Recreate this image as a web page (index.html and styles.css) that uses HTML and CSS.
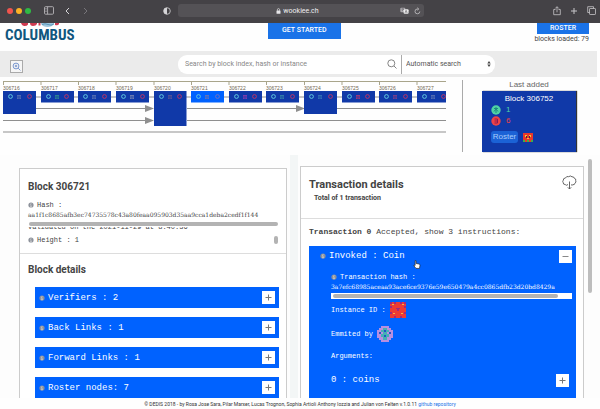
FILE: index.html
```html
<!DOCTYPE html>
<html lang="en">
<head>
<meta charset="utf-8">
<title>Columbus</title>
<link rel="stylesheet" href="styles.css">
</head>
<body>
<svg class="defs" aria-hidden="true">
  <symbol id="info" viewBox="0 0 6 6"><circle cx="3" cy="3" r="2.6" fill="#8d929b"/><path d="M3 1.2v.8M3 2.6v2.2M2.3 2.6H3M2.2 4.8h1.6" stroke="#dcdcdc" stroke-width=".7"/></symbol>
  <symbol id="plus" viewBox="0 0 13 13"><path d="M6.500 3.500v6M3.500 6.500h6" stroke="#777" fill="none"/></symbol>
  <symbol id="minus" viewBox="0 0 13 13"><path d="M3.500 6.500h6" stroke="#888" fill="none"/></symbol>
  <symbol id="ring" viewBox="0 0 5 5"><circle cx="2.500" cy="2.500" r="1.900" fill="none" stroke="currentColor"/></symbol>
  <symbol id="tile" viewBox="0 0 4 4"><path d="M0 .5h4M0 2h1M1.500 2h1M3 2h1M0 3.500h1.500M2.500 3.500H4M1 0v4M3 0v4" stroke="currentColor" stroke-width=".6"/></symbol>
</svg>

<header class="browser">
  <div class="browser-left">
    <i class="light red"></i><i class="light amber"></i><i class="light green"></i>
    <svg class="sidebar-icon" width="10" height="9" viewBox="0 0 10 9" fill="none" stroke="#b5b3b7" stroke-width=".9"><rect x=".5" y=".7" width="9" height="7.500" rx="1"/><path d="M3.600.7v7.500M1.500 2.500h1M1.500 4h1M1.500 5.500h1"/></svg>
    <svg class="back-icon" width="5" height="8" viewBox="0 0 5 8" fill="none" stroke="#d6d5d8"><path d="M4 1 1 4l3 3"/></svg>
    <svg width="5" height="8" viewBox="0 0 5 8" fill="none" stroke="#77757a"><path d="m1 1 3 3-3 3"/></svg>
    <svg class="shield" width="8" height="8" viewBox="0 0 8 8"><circle cx="4" cy="4" r="3.300" fill="none" stroke="#d6d5d8" stroke-width=".8"/><path d="M4 .7a3.300 3.300 0 0 0 0 6.600z" fill="#d6d5d8"/></svg>
  </div>
  <div class="address">
    <svg width="5" height="6" viewBox="0 0 5 6"><rect x=".5" y="2.500" width="4" height="3.200" rx=".5" fill="#e6e5e8"/><path d="M1.400 2.800V1.700a1.100 1.100 0 0 1 2.200 0v1.100" fill="none" stroke="#e6e5e8" stroke-width=".7"/></svg>
    <span>wookiee.ch</span>
    <div class="address-tools">
      <svg width="9" height="8" viewBox="0 0 9 8"><rect x=".3" y=".8" width="5" height="4.500" rx="1" fill="#aaa8ac"/><rect x="3.600" y="2.200" width="5" height="4.500" rx="1" fill="#eee"/><path d="M1.500 2h2.600M2.800 1.500V2M2 4l1.600-2M5 5.800l1.100-2.600 1.100 2.600M5.400 5h1.400" stroke="#555358" stroke-width=".5" fill="none"/></svg>
      <svg width="7" height="8" viewBox="0 0 7 8" fill="none" stroke="#c6c5c8" stroke-width=".8"><path d="M5.800 4.500A2.400 2.400 0 1 1 3.500 2h1M3.300.7 4.700 2 3.300 3.300"/></svg>
    </div>
  </div>
  <div class="browser-right">
    <svg width="8" height="10" viewBox="0 0 8 10" fill="none" stroke="#c6c5c8" stroke-width=".8"><path d="M2.500 3.500H.7v5.200h6.600V3.500H5.500M4 6.300V.8M2.200 2.500 4 .7l1.800 1.800"/></svg>
    <svg width="8" height="8" viewBox="0 0 8 8" stroke="#c6c5c8"><path d="M4 1v6M1 4h6"/></svg>
    <svg width="9" height="9" viewBox="0 0 9 9" fill="none" stroke="#c6c5c8" stroke-width=".8"><path d="M2.500 6.500h-1.800V.7h5.800v1.800"/><rect x="2.500" y="2.500" width="6" height="6" rx=".6"/></svg>
  </div>
</header>

<div class="site-header">
  <div class="logo">
    <svg width="40" height="4" viewBox="0 0 40 4"><path d="M0 0h7v1.500Q6 3 3.500 3T0 0M9 0h7v1Q15 3 12 3T9 0M17.500 0h2v2.500h-2M34 0h4v1q-1 2-4 1" fill="#cf3a50"/><path d="M20 0h13v1q-2 3-6.500 3T20 1z" fill="#9cc5dc"/><path d="M21 1.500q3-1.500 6 0t6-.5" stroke="#3c7fa8" fill="none" stroke-width=".7"/></svg>
    <strong>COLUMBUS</strong>
  </div>
  <button class="get-started">GET STARTED</button>
  <div class="roster-box">
    <button class="roster-top">ROSTER</button>
    <span>blocks loaded: 79</span>
  </div>
</div>

<div class="search-bar">
  <button class="zoom-btn" aria-label="Zoom in"><svg width="9" height="9" viewBox="0 0 9 9" fill="none" stroke="#5b7fc4" stroke-width=".8"><circle cx="4" cy="4" r="2.900"/><path d="m6.200 6.200 2.200 2.200M4 2.800v2.400M2.800 4h2.400"/></svg></button>
  <form class="search">
    <input type="text" aria-label="Search" placeholder="Search by block index, hash or instance">
    <button type="button" class="search-go" aria-label="Run search"><svg width="10" height="10" viewBox="0 0 10 10" fill="none" stroke="#777" stroke-width=".9"><circle cx="4.300" cy="4.300" r="3.500"/><path d="m7 7 2.500 2.500"/></svg></button>
    <div class="mode">
      <select aria-label="Search mode"><option>Automatic search</option></select>
      <svg width="4" height="6" viewBox="0 0 4 6"><path d="M2 0l1.700 2.400H.3zM2 6 .3 3.600h3.400z" fill="#444"/></svg>
    </div>
  </form>
</div>

<section class="chain">
  <svg class="chart" width="443" height="60" viewBox="0 0 443 60">
    <path d="M0 4.500h443" stroke="#a9a58b"/>
    <path d="M.5 4v4M38 4v4M75.500 4v4M113 4v4M151 4v4M188.500 4v4M226 4v4M263.500 4v4M301.500 4v4M339 4v4M376.500 4v4M414 4v4" stroke="#a9a58b"/>
    <g class="labels"><text x="0" y="13">306716</text><text x="38" y="13">306717</text><text x="75" y="13">306718</text><text x="113" y="13">306719</text><text x="151" y="13">306720</text><text x="188" y="13">306721</text><text x="226" y="13">306722</text><text x="263" y="13">306723</text><text x="301" y="13">306724</text><text x="339" y="13">306725</text><text x="376" y="13">306726</text><text x="414" y="13">306727</text></g>
    <path d="M0 20h443M33 31.500h110M184 31.500h110M334 31.500h109M0 43.500h143M184 43.500h259M0 55h443" stroke="#8f8f8f" stroke-width="1.200"/>
    <path d="M142 28l9 3.500-9 3.500zM142 40l9 3.500-9 3.500zM293 28l9 3.500-9 3.500z" fill="#8f8f8f"/>
    <path d="M0 14h33v23H0zM38 14h33v11.500H38zM75 14h33v11.500H75zM113 14h33v11.500h-33zM151 14h32.500v35H151zM226 14h33v11.500h-33zM263 14h33v11.500h-33zM301 14h33v23h-33zM339 14h33v11.500h-33zM376 14h33v11.500h-33zM414 14h29v11.500h-29z" fill="#1039a8"/>
    <path d="M188 14h33v11.500h-33z" fill="#0062ff"/>
    <g color="#5fc7dd"><use href="#ring" x="5" y="17" width="5" height="5"/><use href="#ring" x="43" y="17" width="5" height="5"/><use href="#ring" x="80" y="17" width="5" height="5"/><use href="#ring" x="118" y="17" width="5" height="5"/><use href="#ring" x="156" y="17" width="5" height="5"/><use href="#ring" x="193" y="17" width="5" height="5"/><use href="#ring" x="231" y="17" width="5" height="5"/><use href="#ring" x="268" y="17" width="5" height="5"/><use href="#ring" x="306" y="17" width="5" height="5"/><use href="#ring" x="344" y="17" width="5" height="5"/><use href="#ring" x="381" y="17" width="5" height="5"/><use href="#ring" x="419" y="17" width="5" height="5"/></g>
    <g color="#b83468"><use href="#ring" x="24" y="17" width="5" height="5"/><use href="#ring" x="61" y="17" width="5" height="5"/><use href="#ring" x="99" y="17" width="5" height="5"/><use href="#ring" x="137" y="17" width="5" height="5"/><use href="#ring" x="174" y="17" width="5" height="5"/><use href="#ring" x="212" y="17" width="5" height="5" color="#6f6fc0"/><use href="#ring" x="249" y="17" width="5" height="5"/><use href="#ring" x="287" y="17" width="5" height="5"/><use href="#ring" x="325" y="17" width="5" height="5"/><use href="#ring" x="362" y="17" width="5" height="5"/><use href="#ring" x="400" y="17" width="5" height="5"/><use href="#ring" x="438" y="17" width="5" height="5"/></g>
    <g color="#6d7fb5"><use href="#tile" x="14" y="18" width="4" height="4"/><use href="#tile" x="52" y="18" width="4" height="4" color="#36a08a"/><use href="#tile" x="89" y="18" width="4" height="4"/><use href="#tile" x="127" y="18" width="4" height="4" color="#8d93b5"/><use href="#tile" x="165" y="18" width="4" height="4" color="#6d5c90"/><use href="#tile" x="202" y="18" width="4" height="4" color="#8a7a9a"/><use href="#tile" x="240" y="18" width="4" height="4" color="#a83cae"/><use href="#tile" x="277" y="18" width="4" height="4" color="#3c94a8"/><use href="#tile" x="315" y="18" width="4" height="4" color="#3c84b8"/><use href="#tile" x="353" y="18" width="4" height="4" color="#d03868"/><use href="#tile" x="390" y="18" width="4" height="4" color="#a04080"/><use href="#tile" x="428" y="18" width="4" height="4"/></g>
  </svg>
  <aside class="last">
    <h2>Last added</h2>
    <div class="last-card">
      <h3>Block 306752</h3>
      <p class="ok"><svg width="10" height="10" viewBox="0 0 10 10"><circle cx="5" cy="5" r="4.700" fill="#4fd3a4"/><path d="M5 2v6M3 3.500h4M3 6.500 5 4l2 2.500" stroke="#1c8a80" fill="none"/></svg>1</p>
      <p class="bad"><svg width="10" height="10" viewBox="0 0 10 10"><circle cx="5" cy="5" r="4.700" fill="#ee4345"/><path d="M3.500 3h3v4h-3M3.500 5h3" stroke="#8d1a55" fill="none"/></svg>6</p>
      <div class="last-roster"><button>Roster</button><svg width="10" height="9" viewBox="0 0 10 9"><path d="M0 0h10v9H0z" fill="#e8372c"/><path d="M0 7h2v2H0zM8 7h2v2H8zM4 7h2v2H4z" fill="#3fae49"/><path d="M2 2h2v2H2zM6 2h2v2H6zM4 5h2v1H4z" fill="#f4c531"/><path d="M3 3h1v2H3zM6 3h1v2H6z" fill="#54203a"/></svg></div>
    </div>
  </aside>
</section>

<main class="columns">
  <div class="pane left-pane">
    <section class="card">
      <div class="card-head">
        <h2>Block 306721</h2>
        <p class="meta"><svg class="info"><use href="#info"/></svg>Hash :</p>
        <p class="hash">aa1f1c8685afb3ec74735578c43a80feaa095903d35aa9cca1deba2cedf1f144</p>
        <div class="track"><i></i></div>
        <div class="cut"><p>validated on the 2021-11-29 at 8:40:36</p></div>
        <p class="meta height-row"><svg class="info"><use href="#info"/></svg>Height : 1<i class="mini-thumb"></i></p>
      </div>
      <div class="card-body">
        <h2>Block details</h2>
        <ul class="accordion">
          <li><svg class="info"><use href="#info"/></svg>Verifiers : 2<button aria-label="Expand verifiers"><svg><use href="#plus"/></svg></button></li>
          <li><svg class="info"><use href="#info"/></svg>Back Links : 1<button aria-label="Expand back links"><svg><use href="#plus"/></svg></button></li>
          <li><svg class="info"><use href="#info"/></svg>Forward Links : 1<button aria-label="Expand forward links"><svg><use href="#plus"/></svg></button></li>
          <li><svg class="info"><use href="#info"/></svg>Roster nodes: 7<button aria-label="Expand roster nodes"><svg><use href="#plus"/></svg></button></li>
        </ul>
      </div>
    </section>
  </div>
  <div class="gutter"></div>
  <div class="pane right-pane">
    <section class="card">
      <div class="tx-head">
        <div><h2>Transaction details</h2><p>Total of 1 transaction</p></div>
        <button aria-label="Download"><svg width="15" height="15" viewBox="0 0 15 15" fill="none" stroke="#555" stroke-width=".9"><path d="M6 9.500Q4.500 11 3.300 9.600 1 9.500 1.200 7.600.2 6.500 1.300 5.200 1.200 3 3.500 3 4.500.8 6.600 1.700 8.500.2 10 1.800q2-.3 2.300 1.500 2 .3 1.400 2.300 1 1.700-.8 2.600-.3 1.900-2 1.500Q10 11 9 9.500M7.500 6.500v7.500M5.800 12.300 7.500 14l1.700-1.700"/></svg></button>
      </div>
      <div class="tx-body">
        <p class="tx-summary"><b>Transaction 0</b> Accepted, show 3 instructions:</p>
        <div class="instruction">
          <div class="instruction-head"><svg class="info"><use href="#info"/></svg>Invoked : Coin<button aria-label="Collapse"><svg><use href="#minus"/></svg></button>
            <svg class="pointer" width="8" height="9" viewBox="0 0 8 9"><path d="M2.200.6q.7-.4 1 .3v2.600l2.900.5q1 .3.900 1.200L6.500 8.400H3L.7 5.600q0-.9 1.400-.1z" fill="#fff" stroke="#222" stroke-width=".7"/></svg>
          </div>
          <div class="instruction-body">
            <p class="meta"><svg class="info"><use href="#info"/></svg>Transaction hash :</p>
            <p class="hash">3a7efc68985aceaa93ace6ce9376e59e650479a4cc0865dfb23d20bd8429a</p>
            <div class="track light-track"><i></i></div>
            <p class="line">Instance ID :<svg width="16" height="16" viewBox="0 0 16 16"><path d="M0 0h16v16H0z" fill="#f03a34"/><path d="M0 0h2v2H0zM14 0h2v2h-2zM0 4h2v2H0zM14 4h2v2h-2zM0 10h2v2H0zM14 10h2v2h-2zM4 0h2v2H4zM10 0h2v2h-2zM6 6h4v1H6zM7 7h2v2H7zM4 14h2v2H4zM10 14h2v2h-2z" fill="#a02a80"/><path d="M2 2h2v1H2zM12 2h2v1h-2zM3 11h2v1H3zM11 11h2v1h-2z" fill="#f0b34a"/></svg></p>
            <p class="line">Emmited by<svg width="16" height="16" viewBox="0 0 16 16"><path d="M4 0h8v2h2v2h2v8h-2v2h-2v2H4v-2H2v-2H0V4h2V2h2z" fill="#b78fe0"/><path d="M6 2h4v2h2v2h-2v2h2v3h-2v3H6v-3H4V8h2V6H4V4h2z" fill="#45b0b5"/><path d="M7 4h2v2H7zM7 9h2v2H7zM2 6h2v2H2zM12 6h2v2h-2z" fill="#2457c8"/></svg></p>
            <p class="line short">Arguments:</p>
            <div class="argument">0 : coins<button aria-label="Expand coins"><svg><use href="#plus"/></svg></button></div>
          </div>
        </div>
      </div>
    </section>
    <i class="pane-thumb"></i>
  </div>
</main>

<footer>© DEDIS 2018 - by Rosa Jose Sara, Pilar Marxer, Lucas Trognon, Sophia Artioli Anthony Iozzia and Julian von Felten v.1.0.11 <a href="#">github repository</a></footer>
</body>
</html>
```
FILE: styles.css
```css
* { box-sizing: border-box; }
html { height: 100%; }
body {
  margin: 0;
  height: 100%;
  display: flex;
  flex-direction: column;
  overflow: hidden;
  background: #fefefe;
  color: #444;
  font: 7px/10px Roboto, "Liberation Sans", sans-serif;
}
h2, h3, p, ul { margin: 0; padding: 0; }
svg { display: block; flex: none; }
button { border: 0; padding: 0; margin: 0; font: inherit; display: flex; align-items: center; justify-content: center; }
.defs { position: absolute; width: 0; height: 0; }

.browser {
  flex: none;
  display: grid;
  grid-template-columns: 1fr 41% 1fr;
  align-items: center;
  height: 23px;
  padding: 0 0 2px 2px;
  background: #444246;
}
.browser-left { display: flex; align-items: center; padding: 0 7px 0 5px; }
.light { width: 6px; height: 6px; border-radius: 50%; margin-right: 3px; }
.red { background: #f1544d; }
.amber { background: #fdb225; }
.green { background: #2fb944; }
.sidebar-icon { margin-left: 10px; }
.back-icon { margin: 0 13px 0 11px; }
.shield { margin-left: auto; }
.address {
  display: grid;
  grid-template-columns: 1fr auto 1fr;
  align-items: center;
  gap: 2px;
  height: 13px;
  padding: 0 3px;
  border-radius: 3px;
  background: #545256;
  color: #eeedf0;
}
.address > svg { justify-self: end; }
.address-tools { display: flex; justify-content: flex-end; gap: 5px; }
.browser-right { display: flex; justify-content: flex-end; align-items: center; gap: 9px; padding-right: 4px; }

.site-header {
  flex: none;
  display: grid;
  grid-template-columns: 45% auto 1fr;
  height: 28px;
  padding: 0 11px 0 5px;
}
.logo svg { margin-left: 16px; }
.logo strong {
  display: block;
  color: #10567f;
  font: 700 15px/17px "Liberation Sans Narrow", "Roboto Condensed", Roboto, sans-serif;
}
.get-started, .roster-top { background: #1a73e8; color: #fff; font-weight: 500; }
.get-started { width: 73px; height: 16px; padding-bottom: 3px; }
.roster-box { display: flex; flex-direction: column; align-items: flex-end; }
.roster-top { width: 52px; height: 11px; padding-bottom: 2px; }

.search-bar {
  flex: none;
  display: grid;
  grid-template-columns: 168px 54% 1fr;
  align-items: center;
  height: 26px;
  margin-right: 3px;
  padding-left: 10px;
  background: #ebebeb;
}
.zoom-btn { width: 13px; height: 13px; margin-top: 4px; border: 1px solid #aaa; background: #f6f6f6; }
.search { display: flex; align-items: center; height: 19px; border-radius: 9px; background: #fff; }
.search input { flex: 1; min-width: 0; border: 0; padding: 0 7px; background: none; font: inherit; outline: 0; }
.search input::placeholder { color: #888; opacity: 1; }
.search-go { width: 18px; background: none; }
.mode { display: flex; align-items: center; align-self: stretch; width: 94px; padding-right: 4px; border-left: 1px solid #aaa; }
.mode select { flex: 1; height: 100%; border: 0; padding: 0 4px; background: none; appearance: none; color: #555; font: inherit; }

.chain { flex: none; display: flex; height: 78px; padding: 0 24px 3px 3px; font-family: "Liberation Sans", sans-serif; }
.chart { margin-right: auto; }
.labels { font-size: 5px; fill: #6f6650; }
.last { width: 114px; margin-top: 3px; padding-left: 19px; border-left: 1px solid #aaa; display: flex; flex-direction: column; }
.last h2 { margin-bottom: 2px; font-size: 8px; line-height: 9px; text-align: center; font-weight: 400; color: #666; }
.last-card { flex: 1; padding: 3px 9px; background: #1039a8; box-shadow: 1px 0 1px #333; }
.last h3 { font-size: 8px; line-height: 10px; font-weight: 400; text-align: center; color: #fff; }
.last p { display: flex; gap: 5px; align-items: center; font-size: 8px; line-height: 10px; margin-top: 1px; }
.ok { color: #4fd3a4; }
.bad { color: #ee4345; }
.last-roster { display: flex; align-items: center; gap: 5px; margin-top: 5px; }
.last-roster button { height: 12px; width: 27px; border-radius: 3px; background: #1b62d6; color: #a9cdfb; font-size: 8px; }

.columns {
  flex: 1;
  min-height: 0;
  display: grid;
  grid-template-columns: minmax(0, 290fr) 8px minmax(0, 302fr);
  grid-template-rows: minmax(0, 1fr);
  background: #fdfdfd;
}
.pane { overflow: hidden; display: flex; }
.left-pane { padding: 13px 3px 0 19px; }
.gutter { background: #f3f6f6; }
.right-pane { padding: 11px 8px 0 2px; gap: 4px; }
.card { flex: 1; min-width: 0; border: 1px solid #ccc; border-bottom: 0; background: #fff; font-family: "Liberation Mono", monospace; color: #444; }
.card h2 { font: 700 10px/14px Roboto, sans-serif; color: #444; }
.card-head { padding: 11px 7px 8px 8px; border-bottom: 1px solid #ddd; }
.info { width: 6px; height: 6px; }
.meta { display: flex; align-items: center; gap: 3px; }
.card-head .meta { margin-top: 6px; }
.hash { font-family: "DejaVu Serif", serif; font-size: 6px; white-space: nowrap; }
.track { height: 6px; padding: 1px; margin-top: 1px; }
.track i { display: block; height: 4px; border-radius: 2px; background: #b3b3b3; }
.cut { height: 5px; overflow: hidden; display: flex; align-items: flex-end; }
.card-head .height-row { margin-top: 3px; }
.mini-thumb { width: 4px; height: 8px; margin-left: auto; margin-right: 1px; border-radius: 2px; background: #b3b3b3; }
.card-body { padding: 9px 7px 0 8px; }
.accordion { display: flex; flex-direction: column; gap: 9px; margin-top: 10px; padding-left: 7px; list-style: none; }
.accordion li { display: flex; align-items: center; gap: 3px; height: 21px; padding: 0 4px; background: #0062ff; color: #fff; font-size: 9px; }
.accordion button, .instruction button { width: 13px; height: 13px; margin-left: auto; background: #fff; }
.accordion button svg, .instruction button svg { width: 13px; height: 13px; }

.tx-head { display: flex; justify-content: space-between; align-items: flex-start; height: 52px; padding: 8px 6px 0 8px; border-bottom: 1px solid #ddd; }
.tx-head h2 { font-size: 11px; line-height: 20px; }
.tx-head p { padding-left: 5px; font: 700 7px/7px Roboto, sans-serif; }
.tx-head button { background: none; }
.tx-body { padding: 7px 7px 0 8px; }
.tx-summary { font-size: 8px; line-height: 12px; margin-bottom: 8px; }
.instruction { background: #0062ff; color: #fff; }
.instruction-head { position: relative; display: flex; align-items: center; gap: 3px; height: 20px; padding: 0 4px 0 11px; font-size: 9px; }
.pointer { position: absolute; left: 104px; top: 14px; }
.instruction-body { padding: 6px 4px 20px 22px; }
.light-track { background: #fff; margin-bottom: 3px; }
.light-track i { width: 94%; margin-left: 1px; }
.line { display: flex; align-items: center; gap: 4px; height: 16px; margin-bottom: 8px; }
.short { height: 12px; }
.argument { display: flex; align-items: center; height: 20px; padding-right: 3px; font-size: 9px; }
.pane-thumb { width: 4px; height: 134px; margin-top: -7px; border-radius: 2px; background: #bdbdbd; }

footer { flex: none; height: 11px; font-size: 5px; line-height: 12px; text-align: center; color: #333; }
footer a { color: #1a73e8; text-decoration: none; }
```
